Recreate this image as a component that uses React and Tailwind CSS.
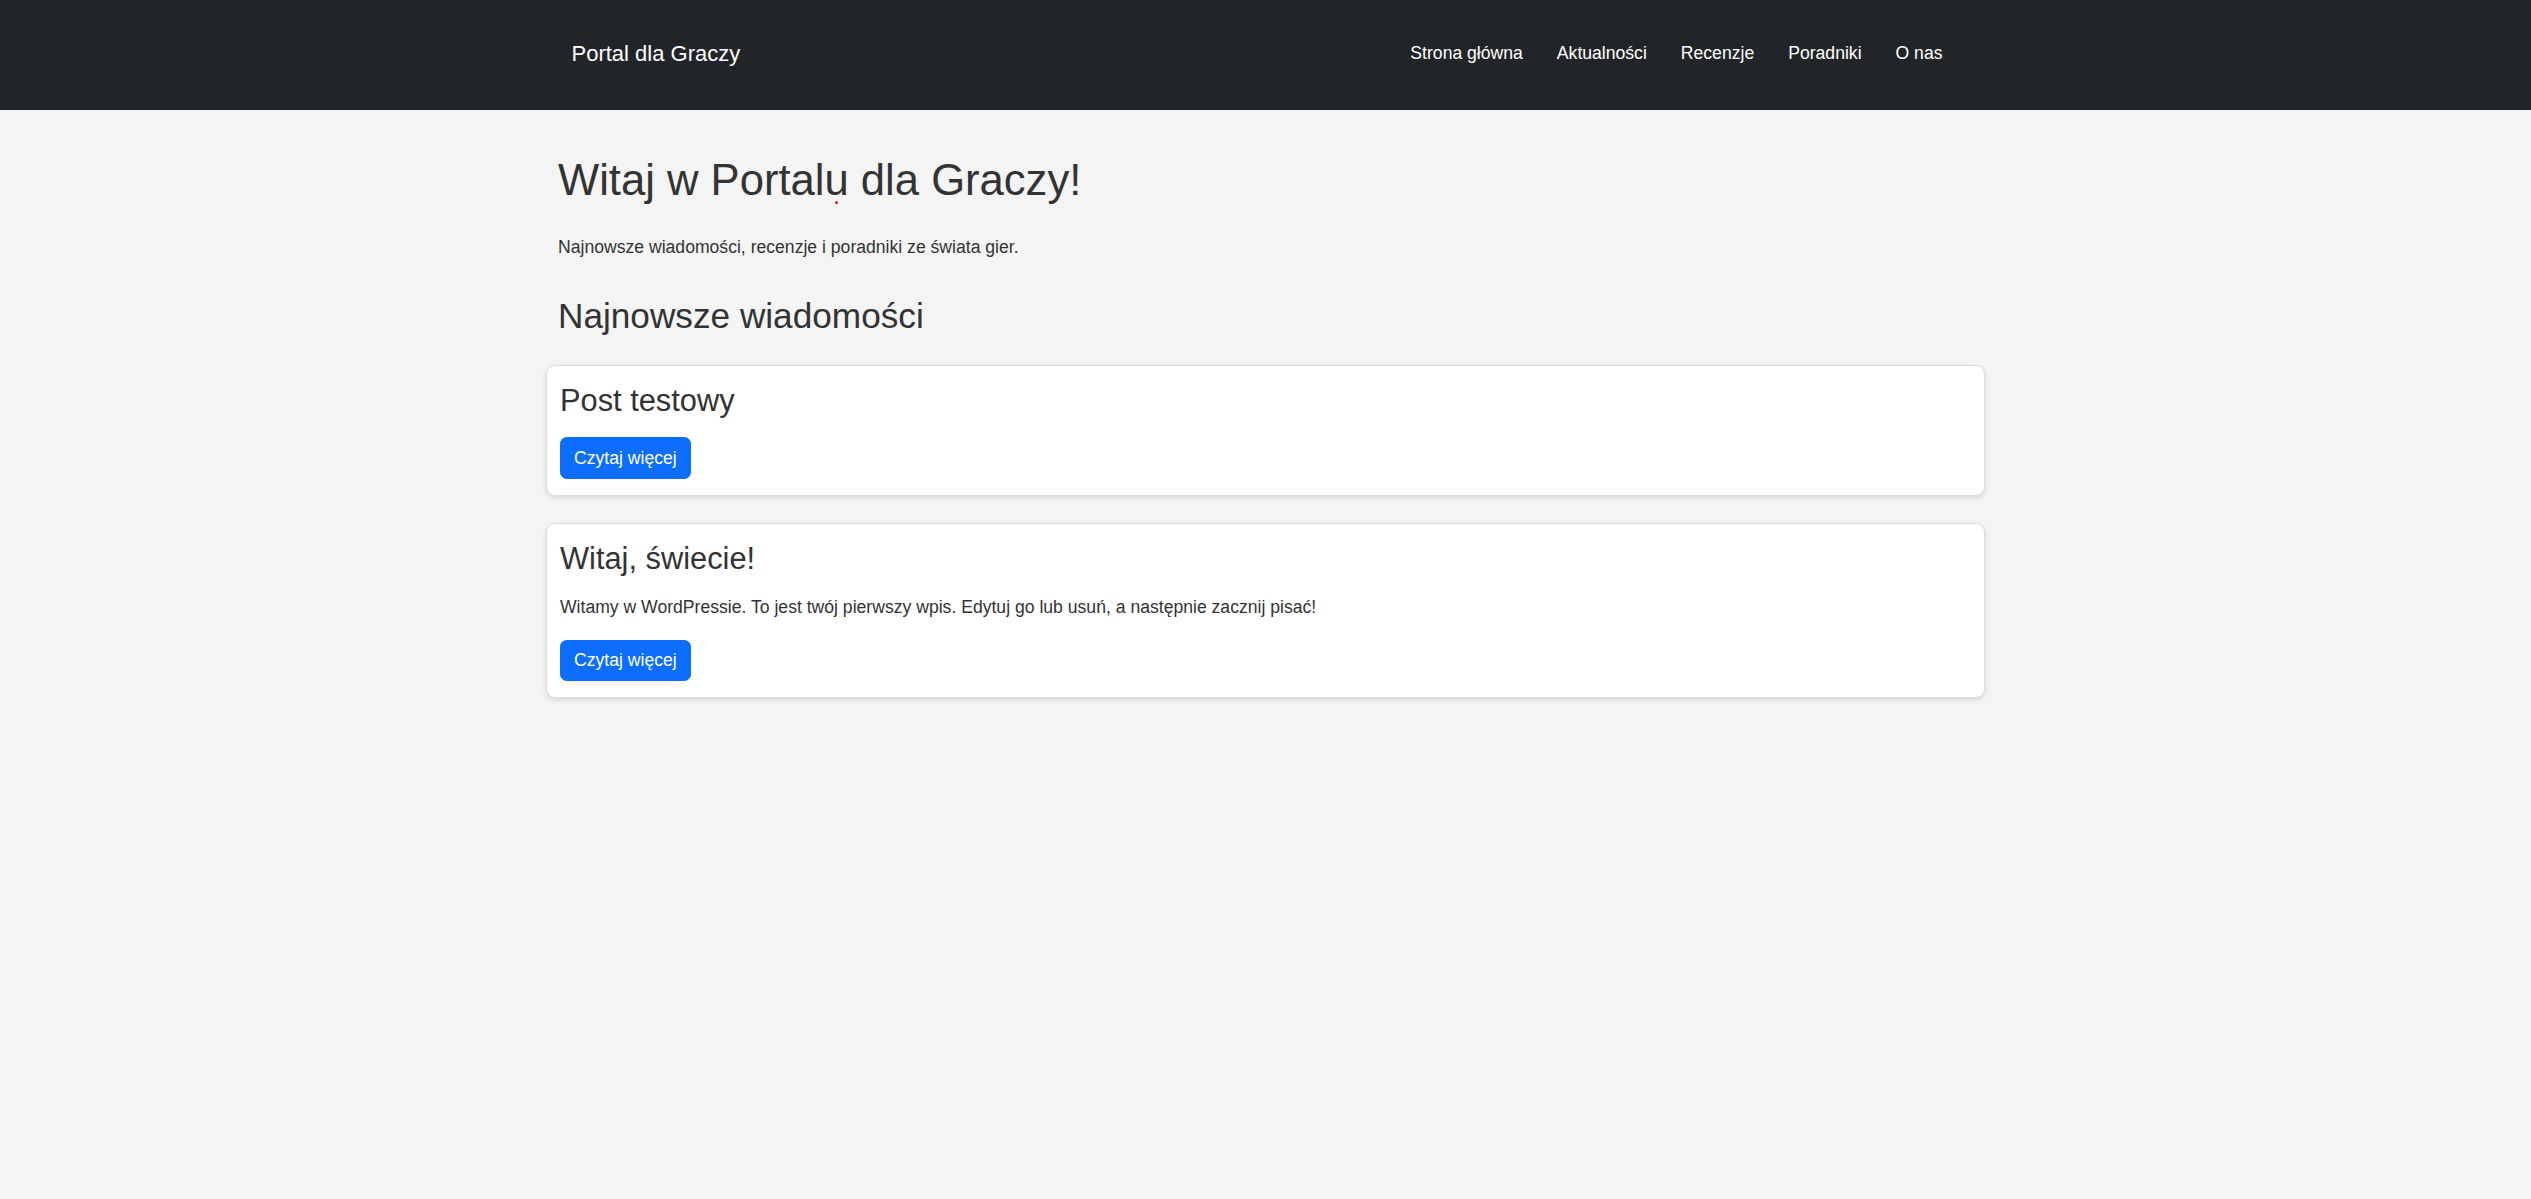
const navLinks = ['Strona główna', 'Aktualności', 'Recenzje', 'Poradniki', 'O nas'];

const posts = [
  { id: 1, title: 'Post testowy', excerpt: '' },
  {
    id: 2,
    title: 'Witaj, świecie!',
    excerpt:
      'Witamy w WordPressie. To jest twój pierwszy wpis. Edytuj go lub usuń, a następnie zacznij pisać!',
  },
];

function Navbar() {
  return (
    <nav className="bg-[#212529] h-[110px]">
      <div className="w-[1438px] mx-auto h-full px-[25px] pb-[4px] flex items-center justify-between">
        <a href="#" className="text-white text-[22px] leading-[33px]">
          Portal dla Graczy
        </a>
        <ul className="flex items-center">
          {navLinks.map((link) => (
            <li key={link}>
              <a href="#" className="block px-[17px] text-white text-[17.6px] leading-[26.4px]">
                {link}
              </a>
            </li>
          ))}
        </ul>
      </div>
    </nav>
  );
}

function PostCard({ post }) {
  return (
    <div className="bg-white border border-[#dedede] rounded-[9px] shadow-[0_2px_5px_rgba(0,0,0,0.12)] pt-[16px] pb-[16px] px-[13px]">
      <h3 className="text-[30.8px] leading-[37px] mb-[17.6px]">{post.title}</h3>
      {post.excerpt && <p className="mt-[3px] mb-[19px]">{post.excerpt}</p>}
      <a
        href="#"
        className="inline-block bg-[#0d6efd] text-white rounded-[6.6px] px-[13px] py-[6.6px] leading-[26.4px] border border-[#0d6efd]"
      >
        Czytaj więcej
      </a>
    </div>
  );
}

export default function App() {
  return (
    <div
      className="min-h-screen bg-[#f4f4f4] text-[#333] text-[17.6px] leading-[26.4px]"
      style={{ fontFamily: '"Liberation Sans", Arial, sans-serif' }}
    >
      <Navbar />

      <main className="w-[1439px] mx-auto pt-[44px]">
        <div className="px-[12px]">
          <h1 className="text-[43.6px] leading-[53px] mb-[27px]">
            Witaj w Portal
            <span className="relative inline-block">
              u
              <span className="absolute left-[11px] top-[47px] w-[3px] h-[3px] rounded-full bg-[#e0141e]" />
            </span>{' '}
            dla Graczy!
          </h1>
          <p>Najnowsze wiadomości, recenzje i poradniki ze świata gier.</p>
          <h2 className="text-[35.2px] leading-[42px] mt-[35px] mb-[28px]">Najnowsze wiadomości</h2>
        </div>

        <div className="flex flex-col gap-[27px]">
          {posts.map((post) => (
            <PostCard key={post.id} post={post} />
          ))}
        </div>
      </main>
    </div>
  );
}
